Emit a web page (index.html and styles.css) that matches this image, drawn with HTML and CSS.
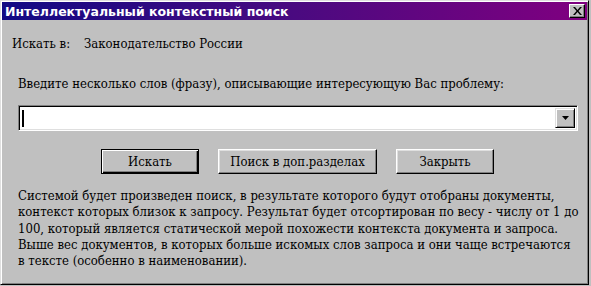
FILE: index.html
```html
<!DOCTYPE html>
<html lang="ru">

<head>
    <meta charset="UTF-8">
    <title>Интеллектуальный контекстный поиск</title>
    <link rel="stylesheet" href="styles.css">
</head>

<body>
    <div class="window">
        <div class="titlebar">
            <span class="title">Интеллектуальный контекстный поиск</span>
            <span class="close">
                <svg width="9" height="8" viewBox="0 0 9 8">
                    <path d="M0 0h2l2.5 3 2.5-3h2L5.5 4 9 8H7L4.5 5 2 8H0l3.5-4z" fill="#000" />
                </svg>
            </span>
        </div>

        <div class="where">
            <span class="label">Искать в:</span>
            <span>Законодательство России</span>
        </div>

        <div class="prompt">Введите несколько слов (фразу), описывающие интересующую Вас проблему:</div>

        <div class="combo">
            <div class="field"><span class="caret"></span></div>
            <span class="drop">
                <svg width="7" height="4" viewBox="0 0 7 4">
                    <path d="M0 0h7L3.5 4z" fill="#000" />
                </svg>
            </span>
        </div>

        <div class="buttons">
            <button class="btn default">Искать</button>
            <button class="btn wide">Поиск в доп.разделах</button>
            <button class="btn">Закрыть</button>
        </div>

        <p class="help">Системой будет произведен поиск, в результате которого будут отобраны документы,
            контекст которых близок к запросу. Результат будет отсортирован по весу - числу от 1 до
            100, который является статической мерой похожести контекста документа и запроса.
            Выше вес документов, в которых больше искомых слов запроса и они чаще встречаются
            в тексте (особенно в наименовании).</p>
    </div>
</body>

</html>
```

FILE: styles.css
```css
body {
    margin: 0;
    background: #c0c0c0;
    font-family: "DejaVu Serif Condensed", "DejaVu Serif", serif;
    font-stretch: condensed;
    font-size: 13px;
    color: #000;
}

/* рамка окна в стиле win95 */
.window {
    width: 589px;
    height: 285px;
    box-sizing: border-box;
    padding: 1px;
    background: #c0c0c0;
    border-top: 1px solid #dfdfdf;
    border-left: 1px solid #dfdfdf;
    border-right: 1px solid #000;
    border-bottom: 1px solid #000;
    box-shadow: inset 1px 1px 0 #fff, inset -1px -1px 0 #808080;
}

.titlebar {
    height: 18px;
    display: flex;
    align-items: center;
    justify-content: space-between;
    padding: 0 2px 0 3px;
    background: linear-gradient(90deg, #120a84, #4a0a80 50%, #800080);
}

.title {
    font-family: "DejaVu Sans", sans-serif;
    font-stretch: normal;
    font-weight: bold;
    font-size: 12.5px;
    color: #fff;
}

.close {
    width: 16px;
    height: 14px;
    box-sizing: border-box;
    display: flex;
    align-items: center;
    justify-content: center;
    background: #c0c0c0;
    border-top: 1px solid #fff;
    border-left: 1px solid #fff;
    border-right: 1px solid #000;
    border-bottom: 1px solid #000;
    box-shadow: inset -1px -1px 0 #808080;
}

.where {
    display: flex;
    margin: 16px 0 0 10px;
    line-height: 16px;
}

.where .label {
    width: 72px;
}

.prompt {
    margin: 24px 0 0 16px;
    line-height: 16px;
}

/* поле ввода с выпадающим списком */
.combo {
    display: flex;
    align-items: stretch;
    margin: 13px 0 0 16px;
    width: 560px;
    height: 26px;
    box-sizing: border-box;
    padding: 2px;
    background: #fff;
    border-top: 1px solid #808080;
    border-left: 1px solid #808080;
    border-right: 1px solid #fff;
    border-bottom: 1px solid #fff;
    box-shadow: inset 1px 1px 0 #000, inset -1px -1px 0 #dfdfdf;
}

.field {
    flex: 1;
    display: flex;
    align-items: center;
    padding-left: 1px;
}

.caret {
    width: 2px;
    height: 17px;
    background: #000;
}

.drop {
    width: 20px;
    display: flex;
    align-items: center;
    justify-content: center;
    box-sizing: border-box;
    background: #c0c0c0;
    border-top: 1px solid #dfdfdf;
    border-left: 1px solid #dfdfdf;
    border-right: 1px solid #000;
    border-bottom: 1px solid #000;
    box-shadow: inset 1px 1px 0 #fff, inset -1px -1px 0 #808080;
}

.buttons {
    display: flex;
    gap: 19px;
    margin: 18px 0 0 99px;
}

.btn {
    width: 98px;
    height: 25px;
    padding: 0;
    font: inherit;
    color: #000;
    background: #c0c0c0;
    border-top: 1px solid #fff;
    border-left: 1px solid #fff;
    border-right: 1px solid #000;
    border-bottom: 1px solid #000;
    box-shadow: inset -1px -1px 0 #808080, inset 1px 1px 0 #dfdfdf;
}

.btn.wide {
    width: 159px;
}

/* кнопка по умолчанию с чёрной рамкой */
.btn.default {
    border: 1px solid #000;
    box-shadow: inset 1px 1px 0 #fff, inset -1px -1px 0 #000, inset -2px -2px 0 #808080;
}

.help {
    margin: 14px 0 0 16px;
    line-height: 16.3px;
    white-space: pre-line;
}
```
